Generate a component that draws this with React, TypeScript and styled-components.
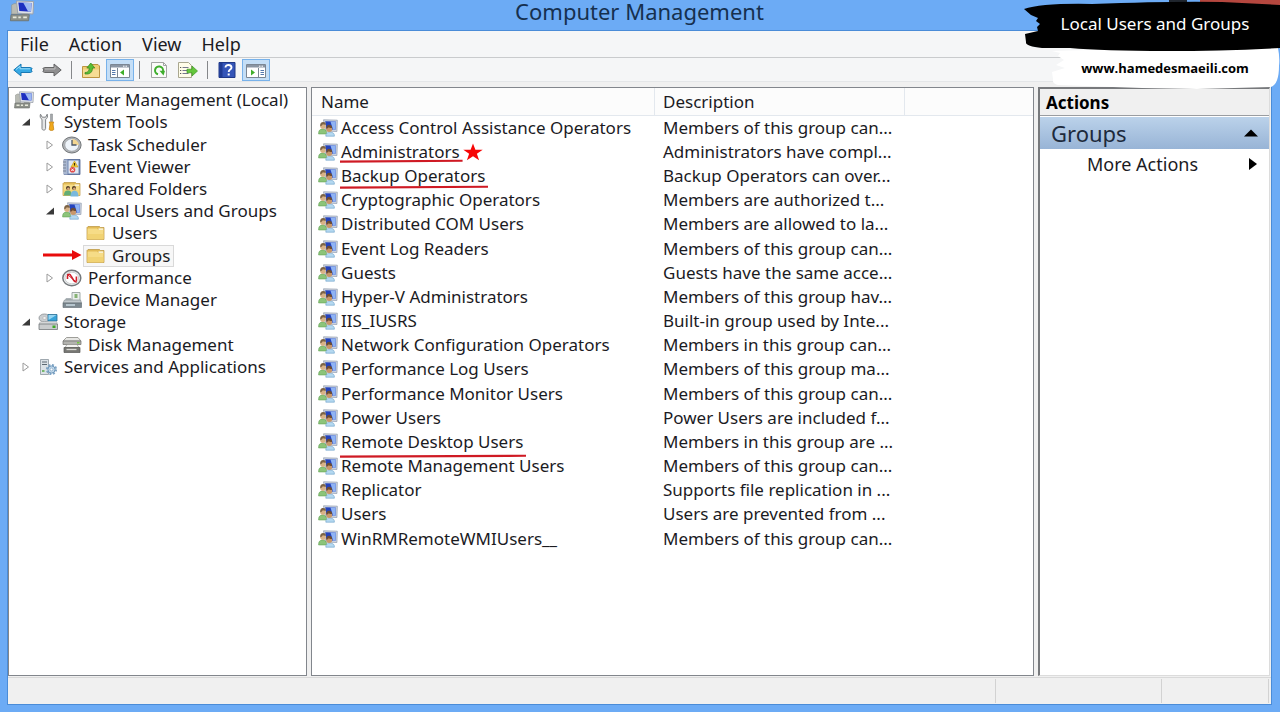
import React from "react";
import styled, { createGlobalStyle, css } from "styled-components";

const GlobalStyle = createGlobalStyle`
  *, *::before, *::after { box-sizing: border-box; }
  body {
    margin: 0;
    background: #fff;
    color: #1b1b1f;
    font: 17px/22px "Noto Sans", "Open Sans", sans-serif;
  }
  button {
    margin: 0;
    padding: 0;
    border: 0;
    background: none;
    color: inherit;
    font: inherit;
    text-align: left;
  }
`;

/* ---------- window frame ---------- */

const Desktop = styled.div`
  position: relative;
  display: flex;
  flex-direction: column;
  min-height: calc(100vh - 8px);
  padding: 0 8px 7px 7px;
  background: #6cabf5;
`;

const TitleBar = styled.header`
  position: relative;
  display: flex;
  justify-content: center;
  height: 30px;
`;

const TitleIcon = styled.span`
  position: absolute;
  left: 2px;
  top: 0;
`;

const Title = styled.h1`
  margin: 0;
  font-size: 22px;
  line-height: 22px;
  font-weight: 400;
  color: #16304f;
`;

const Client = styled.main`
  flex: 1;
  display: flex;
  flex-direction: column;
  border: 1px solid #4a8cd8;
  background: #f0f0f0;
`;

const MenuBar = styled.nav`
  display: flex;
  gap: 20px;
  height: 27px;
  padding: 2px 12px 0;
  border-bottom: 1px solid #c9cbcd;
  background: #f5f6f7;
`;

const MenuItem = styled.button`
  height: 22px;
  font-size: 18px;
`;

const ToolBar = styled.div`
  display: flex;
  align-items: center;
  gap: 1px;
  height: 24px;
  padding: 0 1px;
  border-bottom: 1px solid #e4e6e8;
  background: #f5f6f7;
`;

const ToolButton = styled.button<{ $on?: boolean }>`
  display: flex;
  align-items: center;
  justify-content: center;
  width: 28px;
  height: 22px;
  ${(p) =>
    p.$on &&
    css`
      border: 1px solid #78b2ea;
      background: #c4def6;
    `}
`;

const ToolSeparator = styled.span`
  width: 9px;
  height: 18px;
  background: linear-gradient(#85878a, #85878a) center / 1px 100% no-repeat;
`;

const Panes = styled.div`
  flex: 1;
  display: flex;
  gap: 4px;
  padding: 5px 1px 1px 0;
`;

const pane = css`
  border: 1px solid #82868c;
  background: #fff;
`;

const TreePane = styled.aside`
  ${pane}
  flex: 0 0 299px;
  padding-top: 1px;
`;

const ListPane = styled.section`
  ${pane}
  flex: 1;
  min-width: 0;
`;

const ActionsPane = styled.aside`
  flex: 0 0 232px;
  border: solid;
  border-width: 2px 1px 1px 2px;
  border-color: #77797c #dcdcdc #dcdcdc #77797c;
  background: #fff;
`;

const StatusBar = styled.footer`
  display: flex;
  height: 27px;
  padding: 1px 2px 1px 0;
  border-top: 1px solid #d9d9d9;
`;

const StatusCell = styled.div<{ $width?: number }>`
  flex: ${(p) => (p.$width ? `0 0 ${p.$width}px` : 1)};
  border-right: 1px solid #d2d2d2;
`;

/* ---------- console tree ---------- */

const TreeList = styled.ul`
  display: grid;
  grid-auto-rows: 1fr;
  min-height: 289px;
  margin: 0;
  padding: 0;
  list-style: none;
`;

const TreeRow = styled.li<{ $depth: number }>`
  position: relative;
  display: flex;
  align-items: center;
  padding-left: ${(p) => 2 + 24 * Math.max(0, p.$depth - 1)}px;
`;

const Expander = styled.button`
  display: flex;
  justify-content: center;
  align-items: center;
  width: 24px;
  height: 20px;
  padding-left: 6px;
`;

const ExpanderSpace = styled.span`
  width: 24px;
`;

const TreeLabel = styled.button<{ $selected?: boolean }>`
  display: flex;
  align-items: center;
  gap: 6px;
  height: 22px;
  padding: 0 3px 0 2px;
  border: 1px solid ${(p) => (p.$selected ? "#d9d9d9" : "transparent")};
  background: ${(p) => (p.$selected ? "#f7f7f7" : "transparent")};
  white-space: nowrap;
`;

const Pointer = styled.svg`
  position: absolute;
  left: 34px;
  top: 4px;
`;

/* ---------- group list ---------- */

const Table = styled.table`
  width: 100%;
  border-collapse: separate;
  border-spacing: 0;
  table-layout: fixed;
`;

const HeadCell = styled.th<{ $width?: number }>`
  width: ${(p) => (p.$width ? `${p.$width}px` : "auto")};
  height: 28px;
  padding: 1px 8px 0 9px;
  border-bottom: 1px solid #e3e8ee;
  border-right: 1px solid #e3e8ee;
  background: #fcfcfc;
  font-weight: 400;
  text-align: left;
  &:last-child { border-right: 0; }
  & + & { padding-left: 8px; }
`;

const Rows = styled.tbody`
  & tr:nth-child(6n) td { height: 25px; }
`;

const NameCell = styled.td`
  height: 24px;
  padding: 0 0 0 6px;
`;

const TextCell = styled.td`
  height: 24px;
  padding: 0 0 0 8px;
  overflow: hidden;
  white-space: nowrap;
`;

const NameWrap = styled.div`
  display: flex;
  align-items: center;
  gap: 3px;
  white-space: nowrap;
`;

const Name = styled.span`
  position: relative;
`;

const Marker = styled.svg<{ $drop: number }>`
  position: absolute;
  left: -1px;
  bottom: ${(p) => -p.$drop}px;
  width: calc(100% + 4px);
  height: 4px;
`;

/* ---------- actions pane ---------- */

const ActionsHeading = styled.h2`
  height: 27px;
  margin: 0;
  padding: 3px 6px;
  border-bottom: 1px solid #9a9da1;
  background: #f0f0f0;
  font-size: 17px;
  line-height: 22px;
  font-weight: 700;
  color: #000;
`;

const ActionsGroup = styled.button`
  display: flex;
  align-items: center;
  justify-content: space-between;
  width: 100%;
  height: 32px;
  margin-top: 1px;
  padding: 0 11px;
  background: linear-gradient(#bbd2ea, #98b4d6);
  font-size: 22px;
  color: #1d2a3c;
`;

const ActionsItem = styled.button`
  display: flex;
  align-items: center;
  justify-content: space-between;
  width: 100%;
  height: 30px;
  padding: 0 12px 0 47px;
  font-size: 18px;
`;

/* ---------- brush-stroke banner ---------- */

const Banner = styled.div`
  position: absolute;
  top: 0;
  right: 0;
  width: 258px;
  height: 92px;
`;

const BannerArt = styled.svg`
  position: absolute;
  inset: 0;
`;

const BannerText = styled.div`
  position: relative;
  display: flex;
  flex-direction: column;
  align-items: center;
  gap: 22px;
  padding: 13px 0 0 8px;
  color: #fff;
`;

const BannerLink = styled.a`
  margin-left: 20px;
  color: #000;
  font-family: "Open Sans", sans-serif;
  font-size: 13px;
  font-weight: 700;
  text-decoration: none;
`;

/* ---------- icons ---------- */

const Svg = ({ children, w = 20, h = 18 }: { children: React.ReactNode; w?: number; h?: number }) => (
  <svg width={w} height={h} viewBox={`0 0 ${w} ${h}`} aria-hidden="true">
    {children}
  </svg>
);

const ComputerShape = () => (
  <>
    <path d="M1.500 4l2-1h4l-1 8.500H1.500z" fill="#b9bbb4" stroke="#8f938d" strokeWidth=".5" />
    <path d="M5.500 .8L19.500 1.200L19 11.500L6.500 10.800z" fill="#dfe3e8" stroke="#9ba1ab" strokeWidth=".8" />
    <path d="M7 2L17.800 2.500L17.400 9.600L7.800 9z" fill="#1d2fc0" />
    <path d="M11 2.200l6.800.3-.4 7.100-2.400-.2z" fill="#9db9f2" />
    <path d="M10 11h5v1.500h-5z" fill="#a7abb0" />
    <path d="M1 12h15l-.6 5H.5z" fill="#8d9189" stroke="#686c68" strokeWidth=".6" />
    <path d="M2.500 14.200h3M7 14.200h2M11 14.200h3" stroke="#e8e9dc" strokeWidth="1.400" />
  </>
);

const UsersShape = () => (
  <>
    <path d="M5.500 .8L19.300 1.200L18.900 12.500L7.500 12z" fill="#cfd6e2" stroke="#98a2b4" strokeWidth=".8" />
    <path d="M7.200 2.200L17.800 2.500L17.500 10.800L8.500 10.400z" fill="#2443bd" />
    <path d="M12.500 2.400l5.300.1-.3 8.300-2.500-.1z" fill="#8fb3f3" />
    <path d="M.6 15c-.2-3.600 1.400-5 4-5s4.300 1.800 4 5z" fill="#8cc47a" stroke="#569a48" strokeWidth=".5" />
    <circle cx="5" cy="7.300" r="2.700" fill="#d9b286" />
    <path d="M2.200 7.200c-.3-2.700 1-4.100 3-4.100 1.900 0 3 1.300 2.700 2.600-1.500.3-2.400-.4-3.200-.5-.5 1-1.100 1.700-2.500 2z" fill="#7c6345" />
    <path d="M7.800 17.200c-.2-2.900 1.500-4 4.300-4s4.500 1.100 4.300 4z" fill="#b4d8f0" stroke="#6a9fc8" strokeWidth=".6" />
    <circle cx="11.200" cy="10" r="3" fill="#c9976a" />
    <path d="M8.200 9.600c-.2-2.500 1.100-3.800 3-3.800s3.200 1.400 2.900 3.200c-1.700.2-2.600-.3-3.400-.8-.5.800-1.200 1.300-2.500 1.400z" fill="#6b4c34" />
  </>
);

const FolderShape = () => (
  <>
    <path d="M1 3.500L2 2.500H13.500l1 1H18v12H1z" fill="#e2bb56" stroke="#b9923c" strokeWidth=".7" />
    <path d="M12.500 4.300h4.800v2h-4.800z" fill="#f8f0cf" />
    <path d="M1.500 4.500H11L12.500 6h5v9.300h-16z" fill="#f6dc87" />
    <path d="M1.500 10h16v5.300h-16z" fill="#efce6c" opacity=".7" />
  </>
);

const icons: Record<string, React.ReactNode> = {
  computer: <ComputerShape />,
  users: <UsersShape />,
  folder: <FolderShape />,
  tools: (
    <>
      <path d="M2.500 1.200c-.9 2.600 0 4.200 1.500 5.200v9.200c0 2 3.600 2 3.600 0V6.400C9.300 5.400 10 3.600 9.200 1.200L7.600 4.200H4.200z" fill="#e4e5e6" stroke="#808386" />
      <path d="M12.500 1h2v7.500h-2z" fill="#a5a8ab" stroke="#7f8284" strokeWidth=".5" />
      <path d="M11.200 9h4.600l-.8 2 .8 5.500c-.6 1.300-4 1.300-4.600 0l.8-5.500z" fill="#f0a91c" stroke="#c07e10" strokeWidth=".7" />
    </>
  ),
  clock: (
    <>
      <ellipse cx="9.800" cy="9" rx="9.300" ry="8" fill="#b2b5b8" stroke="#727679" strokeWidth="1" />
      <ellipse cx="9.800" cy="9" rx="7" ry="6.200" fill="#eef4fa" stroke="#8b8f94" strokeWidth=".6" />
      <path d="M10 9V3a7 6.200 0 0 1 6.800 6z" fill="#f3d691" />
      <path d="M10 4v5h4.500" fill="none" stroke="#4c5767" strokeWidth="1.300" />
    </>
  ),
  event: (
    <>
      <path d="M2 1.500h16v15H2z" fill="#7088b4" stroke="#4e6390" strokeWidth=".8" />
      <path d="M2 1.500h3.500v15H2z" fill="#a9b7d0" />
      <path d="M1 4h3M1 7h3M1 10h3M1 13h3" stroke="#7b8597" />
      <path d="M6.500 2.500h10v13h-10z" fill="#dfe6f1" />
      <path d="M12.500 3l3.500 6H9z" fill="#f8ce3a" stroke="#c39518" strokeWidth=".6" />
      <path d="M12.500 5v2.600" stroke="#3c3000" strokeWidth="1.200" />
      <circle cx="10.500" cy="11.800" r="2.800" fill="#e04a4a" />
      <path d="M9.300 10.600l2.400 2.400m0-2.400l-2.400 2.400" stroke="#fff" />
    </>
  ),
  shared: (
    <>
      <FolderShape />
      <circle cx="6" cy="8" r="2" fill="#4e3a25" />
      <circle cx="12" cy="8" r="2" fill="#4e3a25" />
      <path d="M2 15.500c0-4 1.500-5 4-5s3.500 1 3.500 5z" fill="#63ad74" />
      <path d="M8.500 16.500c0-4 1.500-6 4-6s4 2 4 6z" fill="#79b8dc" />
      <circle cx="6.300" cy="8.800" r="1.300" fill="#dba779" />
      <circle cx="12.300" cy="8.800" r="1.300" fill="#dba779" />
    </>
  ),
  performance: (
    <>
      <ellipse cx="9.800" cy="9" rx="9" ry="7.800" fill="#eceeef" stroke="#74787b" strokeWidth="1.500" />
      <ellipse cx="9.800" cy="9" rx="6.800" ry="5.800" fill="#fff" stroke="#b5b8ba" strokeWidth=".6" />
      <path d="M5.500 10V7c.8-2.400 2.500-2 3.500-.2l3 5c1 1.400 2.400.8 2.400-.8V7.500" fill="none" stroke="#d0202b" strokeWidth="1.600" />
      <path d="M5 5l9.500 8.500" stroke="#d0202b" strokeWidth="1" />
    </>
  ),
  device: (
    <>
      <path d="M10 1.500h8v8h-8z" fill="#e9eeec" stroke="#8b9794" strokeWidth=".8" />
      <path d="M12.500 3h3v4h-3z" fill="#86b374" />
      <path d="M4 7h5l1 2H3z" fill="#adb4b8" />
      <path d="M2.500 9h16l1 3H1z" fill="#c2c9cd" stroke="#7e878c" strokeWidth=".6" />
      <path d="M1 12h18.500v4.500H1z" fill="#7d8990" stroke="#5d676d" strokeWidth=".6" />
      <path d="M4 14h9" stroke="#cfe0e8" strokeWidth="1.400" />
    </>
  ),
  storage: (
    <>
      <ellipse cx="6.500" cy="5" rx="5.500" ry="4" fill="#c9cdd0" stroke="#898e92" strokeWidth=".8" />
      <ellipse cx="6.500" cy="5" rx="1.800" ry="1.200" fill="#fff" stroke="#999" strokeWidth=".5" />
      <path d="M10 1.500h9v6.500h-9z" fill="#38a3d8" stroke="#2b6f94" strokeWidth=".8" />
      <path d="M10.500 2h8l-8 5z" fill="#95d5f2" />
      <path d="M2 9h17v2H1z" fill="#e6e8e9" stroke="#a0a4a6" strokeWidth=".5" />
      <path d="M1 11h18.500v5.500H1z" fill="#c9cccd" stroke="#74797b" strokeWidth=".8" />
      <path d="M14.500 12.500h3v2.500h-3z" fill="#3fa928" />
    </>
  ),
  disk: (
    <>
      <path d="M4.500 1.500h11.500l3 3.500H1z" fill="#e6e6e3" stroke="#888883" strokeWidth=".8" />
      <path d="M1 5h18v3.500H1z" fill="#b3b3af" stroke="#6e6e6a" strokeWidth=".7" />
      <path d="M5 8.500h10l2 3H3z" fill="#f4f4f1" stroke="#888883" strokeWidth=".6" />
      <path d="M2 11.500h16v5H2z" fill="#777773" stroke="#585855" strokeWidth=".7" />
      <path d="M4.500 13.500h10" stroke="#d9d9d5" strokeWidth="1.300" />
      <path d="M15 6h2.500v1.500h-2.500z" fill="#72c642" />
    </>
  ),
  services: (
    <>
      <path d="M2.500 1.500h8v15h-8z" fill="#dce2e6" stroke="#8a959d" strokeWidth=".8" />
      <path d="M4 4h5M4 6.500h5" stroke="#5d6972" strokeWidth="1.200" />
      <path d="M4 13h2.500" stroke="#55a844" strokeWidth="1.500" />
      <circle cx="13.500" cy="11.500" r="4.600" fill="none" stroke="#7fa5c6" strokeWidth="2" strokeDasharray="2 1.600" />
      <circle cx="13.500" cy="11.500" r="3.600" fill="#c1d8ea" stroke="#6e97bb" strokeWidth="1" />
      <circle cx="13.500" cy="11.500" r="1.400" fill="#fff" stroke="#6e97bb" strokeWidth=".6" />
    </>
  ),
};

const ConsoleIcon = ({ mirrored }: { mirrored?: boolean }) => (
  <Svg w={20} h={16}>
    <path d="M.5 2.500h19v13H.5z" fill="#fff" stroke="#7b8693" />
    <path d="M1 3h18v2.500H1z" fill="#8a95a3" />
    <path d="M13 4.200h1.500M15.500 4.200h1.500" stroke="#fff" />
    {mirrored ? (
      <>
        <path d="M12.500 6v9.500" stroke="#7b8693" />
        <path d="M14.500 8.500h3.500M14.500 10.500h3.500M14.500 12.500h3.500" stroke="#5578ac" />
        <path d="M5 7.500l4 3-4 3z" fill="#3fae2a" />
      </>
    ) : (
      <>
        <path d="M7.500 6v9.500" stroke="#7b8693" />
        <path d="M2 8.500h3.500M2 10.500h3.500M2 12.500h3.500" stroke="#5578ac" />
        <path d="M14 7.500l-4 3 4 3z" fill="#3fae2a" />
      </>
    )}
  </Svg>
);

const BackIcon = () => (
  <Svg w={20} h={16}>
    <path d="M.8 8L8 2v3.500h9.500l1.700 1-1.200 1.500 1.200 1.500-1.700 1H8V14z" fill="#36a9e4" stroke="#1979b4" />
    <path d="M3 7.500L7 4.300v2.500h10" fill="none" stroke="#9adcf8" />
  </Svg>
);

const ForwardIcon = () => (
  <Svg w={20} h={16}>
    <path d="M19.200 8L12 2v3.500H2.500l-1.700 1L2 8 .8 9.500l1.700 1H12V14z" fill="#8f8f90" stroke="#646566" />
    <path d="M3 7h10V4.500" fill="none" stroke="#bcbcbd" />
  </Svg>
);

const UpFolderIcon = () => (
  <Svg w={18} h={16}>
    <path d="M.5 4.500h7l1.500-2h7l1.500 1.500v11.500H.5z" fill="#f0cc72" stroke="#bd9440" />
    <path d="M1 7.500h16v7.500H1z" fill="#f7dd94" />
    <path d="M3 10.500c3 0 4.200-1.500 4.200-4.500H4.800L8.800 1l4 5h-2.300c0 4.500-2.800 6.500-7.500 6z" fill="#59bd34" stroke="#35851d" strokeWidth=".7" />
  </Svg>
);

const RefreshIcon = () => (
  <Svg w={18} h={16}>
    <path d="M1.500.5h12l3 3v12h-15z" fill="#fbfbfa" stroke="#a3a5a3" />
    <path d="M13.500.5v3h3" fill="none" stroke="#a3a5a3" />
    <path d="M8 12.300A4 4 0 1 1 13 9" fill="none" stroke="#3fae2d" strokeWidth="2" />
    <path d="M9.500 8.800h5.500l-1.500 4.700z" fill="#3fae2d" />
  </Svg>
);

const ExportIcon = () => (
  <Svg w={20} h={16}>
    <path d="M.5.5h10l3 3v12H.5z" fill="#fffde9" stroke="#a9a78f" />
    <path d="M4.500 5.500h6M4.500 8.500h5M4.500 11.500h6" stroke="#77788d" />
    <path d="M2.200 5.500h1M2.200 8.500h1M2.200 11.500h1" stroke="#333" />
    <path d="M9 7.200h5V4l5.500 5-5.500 5v-3.200H9z" fill="#64c63c" stroke="#3b9720" strokeWidth=".7" />
  </Svg>
);

const HelpIcon = () => (
  <Svg w={18} h={16}>
    <path d="M1 .5h16v15H1z" fill="#3455b8" stroke="#1f3887" />
    <path d="M1.500 1h3v14h-3z" fill="#203b93" />
    <path d="M7.500 5.500c0-3.500 6-3.300 6 0 0 2.200-2.800 2-2.800 4.500" fill="none" stroke="#fff" strokeWidth="1.900" />
    <path d="M9.700 11.500h2v2h-2z" fill="#fff" />
  </Svg>
);

/* ---------- data ---------- */

type Node = { label: string; icon: string; depth: number; open?: boolean; selected?: boolean };

const tree: Node[] = [
  { label: "Computer Management (Local)", icon: "computer", depth: 0 },
  { label: "System Tools", icon: "tools", depth: 1, open: true },
  { label: "Task Scheduler", icon: "clock", depth: 2, open: false },
  { label: "Event Viewer", icon: "event", depth: 2, open: false },
  { label: "Shared Folders", icon: "shared", depth: 2, open: false },
  { label: "Local Users and Groups", icon: "users", depth: 2, open: true },
  { label: "Users", icon: "folder", depth: 3 },
  { label: "Groups", icon: "folder", depth: 3, selected: true },
  { label: "Performance", icon: "performance", depth: 2, open: false },
  { label: "Device Manager", icon: "device", depth: 2 },
  { label: "Storage", icon: "storage", depth: 1, open: true },
  { label: "Disk Management", icon: "disk", depth: 2 },
  { label: "Services and Applications", icon: "services", depth: 1, open: false },
];

/* underline: how far below the name its red mark is drawn */
type Group = { name: string; text: string; underline?: number; starred?: boolean };

const groups: Group[] = [
  { name: "Access Control Assistance Operators", text: "Members of this group can..." },
  { name: "Administrators", text: "Administrators have compl...", underline: 0, starred: true },
  { name: "Backup Operators", text: "Backup Operators can over...", underline: 2 },
  { name: "Cryptographic Operators", text: "Members are authorized t..." },
  { name: "Distributed COM Users", text: "Members are allowed to la..." },
  { name: "Event Log Readers", text: "Members of this group can..." },
  { name: "Guests", text: "Guests have the same acce..." },
  { name: "Hyper-V Administrators", text: "Members of this group hav..." },
  { name: "IIS_IUSRS", text: "Built-in group used by Inte..." },
  { name: "Network Configuration Operators", text: "Members in this group can..." },
  { name: "Performance Log Users", text: "Members of this group ma..." },
  { name: "Performance Monitor Users", text: "Members of this group can..." },
  { name: "Power Users", text: "Power Users are included f..." },
  { name: "Remote Desktop Users", text: "Members in this group are ...", underline: 5 },
  { name: "Remote Management Users", text: "Members of this group can..." },
  { name: "Replicator", text: "Supports file replication in ..." },
  { name: "Users", text: "Users are prevented from ..." },
  { name: "WinRMRemoteWMIUsers__", text: "Members of this group can..." },
];

/* ---------- parts ---------- */

const TreeItem = ({ node }: { node: Node }) => (
  <TreeRow $depth={node.depth}>
    {node.depth > 0 &&
      (node.open === undefined ? (
        <ExpanderSpace />
      ) : (
        <Expander aria-label={`Toggle ${node.label}`} aria-expanded={node.open}>
          <Svg w={10} h={10}>
            {node.open ? (
              <path d="M9 1.500v7H1z" fill="#3a3a3a" />
            ) : (
              <path d="M2 1l5.500 4L2 9z" fill="#fff" stroke="#9b9b9b" />
            )}
          </Svg>
        </Expander>
      ))}
    <TreeLabel $selected={node.selected}>
      <Svg>{icons[node.icon]}</Svg>
      {node.label}
    </TreeLabel>
    {node.selected && (
      <Pointer width="40" height="12" viewBox="0 0 40 12" aria-hidden="true">
        <path d="M0 6h31" stroke="#e80c0c" strokeWidth="3" />
        <path d="M29 1L38.500 6L29 11z" fill="#e80c0c" />
      </Pointer>
    )}
  </TreeRow>
);

const GroupRow = ({ group }: { group: Group }) => (
  <tr>
    <NameCell>
      <NameWrap>
        <Svg>{icons.users}</Svg>
        <Name>
          {group.name}
          {group.underline !== undefined && (
            <Marker $drop={group.underline} viewBox="0 0 100 4" preserveAspectRatio="none" aria-hidden="true">
              <path d="M0 1.500L100 .8V2.800L0 3.700z" fill="#cf1a24" />
            </Marker>
          )}
        </Name>
        {group.starred && (
          <Svg w={20} h={18}>
            <path d="M10 .5l2.400 6.200h7.300l-5.800 4 2.200 6.600L10 13.300l-6.100 4 2.200-6.600-5.800-4h7.300z" fill="#f60606" />
          </Svg>
        )}
      </NameWrap>
    </NameCell>
    <TextCell>{group.text}</TextCell>
    <td />
  </tr>
);

export default function App() {
  return (
    <>
      <GlobalStyle />
      <Desktop>
        <TitleBar>
          <TitleIcon>
            <svg width="26" height="22" viewBox="0 0 20 18" aria-hidden="true">
              <ComputerShape />
            </svg>
          </TitleIcon>
          <Title>Computer Management</Title>
        </TitleBar>
        <Client>
          <MenuBar>
            {["File", "Action", "View", "Help"].map((m) => (
              <MenuItem key={m}>{m}</MenuItem>
            ))}
          </MenuBar>
          <ToolBar>
            <ToolButton aria-label="Back"><BackIcon /></ToolButton>
            <ToolButton aria-label="Forward"><ForwardIcon /></ToolButton>
            <ToolSeparator />
            <ToolButton aria-label="Up one level"><UpFolderIcon /></ToolButton>
            <ToolButton $on aria-label="Show or hide console tree"><ConsoleIcon /></ToolButton>
            <ToolSeparator />
            <ToolButton aria-label="Refresh"><RefreshIcon /></ToolButton>
            <ToolButton aria-label="Export list"><ExportIcon /></ToolButton>
            <ToolSeparator />
            <ToolButton aria-label="Help topics"><HelpIcon /></ToolButton>
            <ToolButton $on aria-label="Show or hide action pane"><ConsoleIcon mirrored /></ToolButton>
          </ToolBar>
          <Panes>
            <TreePane>
              <TreeList>
                {tree.map((n) => (
                  <TreeItem key={n.label} node={n} />
                ))}
              </TreeList>
            </TreePane>
            <ListPane>
              <Table>
                <thead>
                  <tr>
                    <HeadCell $width={343}>Name</HeadCell>
                    <HeadCell $width={250}>Description</HeadCell>
                    <HeadCell aria-label="Empty" />
                  </tr>
                </thead>
                <Rows>
                  {groups.map((g) => (
                    <GroupRow key={g.name} group={g} />
                  ))}
                </Rows>
              </Table>
            </ListPane>
            <ActionsPane>
              <ActionsHeading>Actions</ActionsHeading>
              <ActionsGroup>
                Groups
                <Svg w={14} h={8}><path d="M0 7.500L7 .5l7 7z" fill="#000" /></Svg>
              </ActionsGroup>
              <ActionsItem>
                More Actions
                <Svg w={8} h={12}><path d="M0 0l8 6-8 6z" fill="#000" /></Svg>
              </ActionsItem>
            </ActionsPane>
          </Panes>
          <StatusBar>
            <StatusCell />
            <StatusCell $width={166} />
            <StatusCell $width={107} />
          </StatusBar>
        </Client>
        <Banner>
          <BannerArt width="258" height="92" viewBox="0 0 258 92" aria-hidden="true">
            <path d="M147 0h18v4h-18z" fill="#20262e" />
            <path d="M178 0h80v6h-80z" fill="#b5473f" />
            <path d="M30 51L66 50L180 49L256 48Q258 58 257 66Q257 84 249 87L175 89L120 88L91 87L36 85Q30 84 31 79L30 72L43 68L34 65L42 60L36 56L38 53z" fill="#fff" />
            <path d="M2 9Q20 3 70 4Q150 1 200 2L258 5V48Q200 51 145 51Q80 51 48 48L20 48Q3 46 4 42L3 34L16 31L15 27L18 24L14 21L16 18L9 15z" fill="#000" />
          </BannerArt>
          <BannerText>
            Local Users and Groups
            <BannerLink href="https://www.hamedesmaeili.com">www.hamedesmaeili.com</BannerLink>
          </BannerText>
        </Banner>
      </Desktop>
    </>
  );
}
